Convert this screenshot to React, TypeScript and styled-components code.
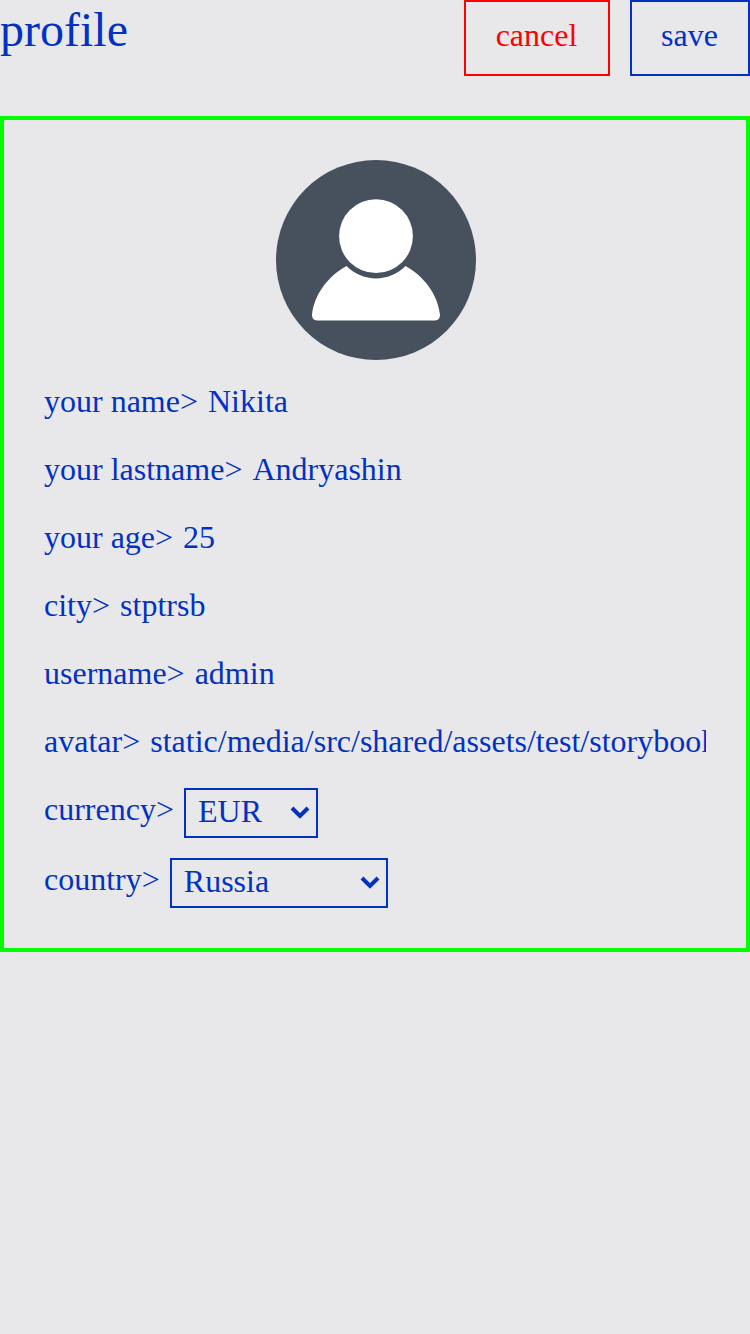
import React from 'react';
import styled, { createGlobalStyle } from 'styled-components';

const GlobalStyle = createGlobalStyle`
  *, *::before, *::after { box-sizing: border-box; }
  body {
    margin: 0;
    background: #e8e8ea;
    color: #0232c2;
    font: 32px/36px "Liberation Serif", "Times New Roman", serif;
  }
`;

const Page = styled.main`
  min-height: 1334px;
`;

const Header = styled.header`
  display: flex;
  align-items: flex-start;
  height: 76px;
  margin-bottom: 40px;
`;

const Title = styled.h1`
  margin: 0 auto 0 0;
  font-size: 48px;
  line-height: 60px;
  font-weight: 400;
`;

const Button = styled.button<{ $danger?: boolean; $width: number }>`
  width: ${(p) => p.$width}px;
  height: 76px;
  padding: 0 1px 6px 0;
  margin-left: 20px;
  border: 2px solid currentColor;
  background: none;
  color: ${(p) => (p.$danger ? '#ff0000' : '#0232c2')};
  font: inherit;
`;

const Card = styled.section`
  display: flex;
  flex-direction: column;
  gap: 20px;
  height: 836px;
  padding: 40px;
  border: 4px solid #00ff00;
`;

const Avatar = styled.svg`
  display: block;
  align-self: center;
  width: 200px;
  height: 200px;
  margin-left: 2px;
  flex: none;
`;

const Row = styled.label<{ $tall?: boolean }>`
  display: flex;
  align-items: flex-start;
  gap: 10px;
  height: ${(p) => (p.$tall ? 50 : 48)}px;
  line-height: 42px;
  white-space: nowrap;
`;

const Input = styled.input`
  flex: 1;
  min-width: 0;
  height: 42px;
  padding: 0;
  border: 0;
  outline: 0;
  background: none;
  color: inherit;
  font: inherit;
`;

const Picker = styled.button<{ $width: number }>`
  display: flex;
  align-items: center;
  justify-content: space-between;
  width: ${(p) => p.$width}px;
  height: 50px;
  padding: 0 6px 4px 12px;
  border: 2px solid #0232c2;
  background: none;
  color: inherit;
  font: inherit;
`;

const Chevron = styled.svg`
  width: 20px;
  height: 14px;
  margin-top: 2px;
  fill: none;
  stroke: currentColor;
  stroke-width: 4;
`;

const fields = [
  ['your name>', 'Nikita'],
  ['your lastname>', 'Andryashin'],
  ['your age>', '25'],
  ['city>', 'stptrsb'],
  ['username>', 'admin'],
  ['avatar>', 'static/media/src/shared/assets/test/storybook.jpg'],
];

const selects = [
  { label: 'currency>', value: 'EUR', width: 134 },
  { label: 'country>', value: 'Russia', width: 218 },
];

export default function App() {
  return (
    <Page>
      <GlobalStyle />
      <Header>
        <Title>profile</Title>
        <Button $danger $width={146}>cancel</Button>
        <Button $width={120}>save</Button>
      </Header>
      <Card>
        <Avatar viewBox="0 0 200 200">
          <circle cx="100" cy="100" r="100" fill="#47515e" />
          <circle cx="100" cy="76.200" r="36.900" fill="#fff" />
          <path d="M70.500 106C52 116 38 135 36 155Q36 160 41 160.500H159Q164 160 164 155C162 135 148 116 129.500 106C113 122.500 87 122.500 70.500 106Z" fill="#fff" />
        </Avatar>
        {fields.map(([label, value]) => (
          <Row key={label}>
            {label}
            <Input defaultValue={value} />
          </Row>
        ))}
        {selects.map(({ label, value, width }) => (
          <Row key={label} $tall>
            {label}
            <Picker $width={width}>
              {value}
              <Chevron viewBox="0 0 20 14">
                <path d="M2 3L10 11L18 3" />
              </Chevron>
            </Picker>
          </Row>
        ))}
      </Card>
    </Page>
  );
}
